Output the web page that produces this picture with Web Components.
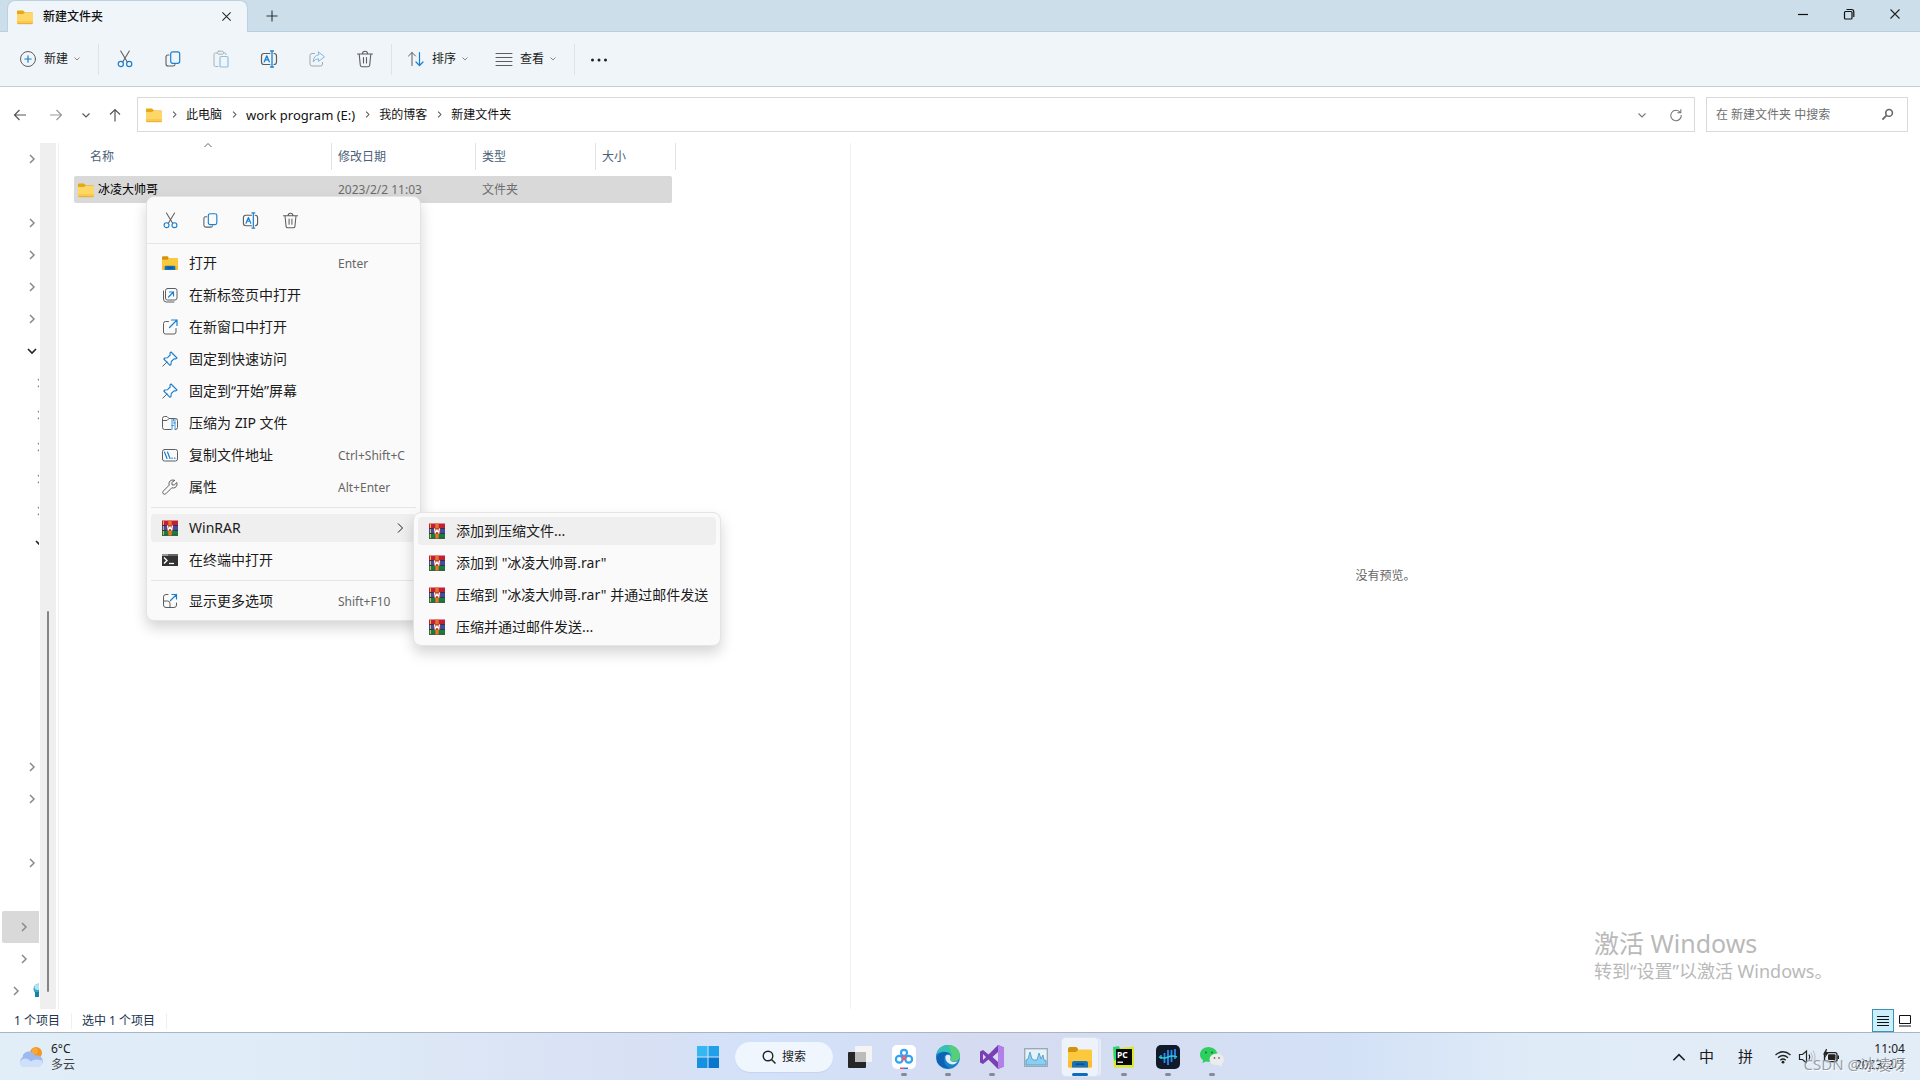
<!DOCTYPE html>
<html lang="zh-CN">
<head>
<meta charset="utf-8">
<meta name="viewport" content="width=device-width, initial-scale=1">
<title>新建文件夹</title>
<style>
  html, body { height: 100%; margin: 0; }
  body {
    font: 12px/16px "Noto Sans", "Noto Sans CJK SC", sans-serif;
    color: #1b1b1b;
    background: #fff;
    overflow: hidden;
    --line: #5e5e5e;
    --blue: #1b7fcf;
  }
</style>
</head>
<body>
<explorer-app></explorer-app>

<script>
const L = 'fill="none" stroke="var(--line)" stroke-linecap="round" stroke-linejoin="round"';
const B = 'fill="none" stroke="var(--blue)" stroke-linecap="round" stroke-linejoin="round"';

// name: [viewBox size, markup]
const ICONS = {
  folder: [16, `<path d="M0 2.5Q0 1.5 1 1.5H6L8 3.5H15Q16 3.5 16 4.500V6H0Z" fill="#e8a812"/><path d="M0 5H6L7.500 4H15.500Q16 4 16 4.500V14Q16 15 15 15H1Q0 15 0 14Z" fill="#ffd766"/><path d="M0 12H16V14Q16 15 15 15H1Q0 15 0 14Z" fill="#fcca4a"/><path d="M.5 14.700H15.500" stroke="#d9a227" stroke-width=".7"/>`],
  explorer: [24, `<path d="M0 4Q0 2 2 2H8Q9 2 10 4L10 8H0Z" fill="#d4930d"/><path d="M0 7H8L10.500 4.500H23Q24 4.500 24 6V21Q24 22.500 22.500 22.500H1.500Q0 22.500 0 21Z" fill="#fdc93c"/><path d="M0 16H24V21Q24 22.500 22.500 22.500H1.500Q0 22.500 0 21Z" fill="#fdbd2c"/><path d="M4 22.500V18Q4 16 6 16H18Q20 16 20 18V22.500Z" fill="#1672ba"/><path d="M7.500 19.200H16.500" stroke="#0b4f8c" stroke-width="1.500"/>`],
  close: [12, `<path d="M1.500 1.500 10.500 10.500M10.500 1.500 1.500 10.500" fill="none" stroke="#222" stroke-width="1.100"/>`],
  plus: [12, `<path d="M6 .5V11.500M.5 6H11.500" stroke="#333" stroke-width="1.100"/>`],
  min: [12, `<path d="M1 6.500H11" stroke="#111" stroke-width="1.200"/>`],
  restore: [12, `<rect x="1.500" y="3.500" width="7.500" height="7.500" rx="1" fill="none" stroke="#111" stroke-width="1.200"/><path d="M3.500 1.500H8.500Q10.800 1.500 10.800 4V9" fill="none" stroke="#111" stroke-width="1.200"/>`],
  add: [18, `<circle cx="9" cy="9" r="7.500" ${L}/><path d="M9 5.800V12.200M5.800 9H12.200" ${B} stroke-width="1.200"/>`],
  cut: [18, `<path d="M4.700 1 11.300 12M13.300 1 6.700 12" ${L} stroke-width="1.100"/><circle cx="4.800" cy="14" r="2.600" ${B} stroke-width="1.200"/><circle cx="13.200" cy="14" r="2.600" ${B} stroke-width="1.200"/>`],
  copy: [18, `<path d="M5 5H4Q2 5 2 7V14Q2 16 4 16H9Q11 16 11 14.500" ${L} stroke-width="1.100"/><rect x="6.700" y="1.800" width="9" height="11.500" rx="2" ${B} stroke-width="1.200"/>`],
  paste: [18, `<g opacity=".45"><path d="M5.500 3H3.500Q2 3 2 4.500V15Q2 16.500 3.500 16.500H6M12 3H13Q14 3 14 4.500" ${L}/><rect x="5.500" y="1.200" width="6" height="3" rx="1.300" ${L}/><rect x="8" y="6.500" width="8" height="10.500" rx="1.300" ${B} stroke-width="1.200"/></g>`],
  rename: [18, `<path d="M10 3.500H4Q1.500 3.500 1.500 6V12Q1.500 14.500 4 14.500H10M14 3.500Q16.500 3.500 16.500 6V12Q16.500 14.500 14 14.500" ${L} stroke-width="1.200"/><path d="M4.300 11.800 6.800 5.800 9.300 11.800M5.200 9.800H8.400" ${B} stroke-width="1.300"/><path d="M10.500 1H13.500M10.500 17H13.500M12 1V17" ${B} stroke-width="1.300"/>`],
  share: [18, `<g opacity=".5"><path d="M6.500 3.500H4Q2 3.500 2 5.500V14Q2 16 4 16H12.500Q14.500 16 14.500 14V12.500" ${L}/><path d="M10.500 2 16.500 6.800 10.500 11.500V8.800Q7 8.700 5.200 12Q5.500 5.300 10.500 4.800Z" ${B}/></g>`],
  trash: [18, `<path d="M1.500 4H16.500M6.500 3.700Q6.500 1.300 9 1.300T11.500 3.700M3.200 4.200 4.300 15.200Q4.500 16.700 6 16.700H12Q13.500 16.700 13.700 15.200L14.800 4.200M7.500 7.500V13M10.500 7.500V13" ${L} stroke-width="1.100"/>`],
  sort: [18, `<path d="M5 15.500V2.500M1.500 6 5 2.500 8.500 6" ${L}/><path d="M12.500 2.500V15.500M9 12 12.500 15.500 16 12" ${B} stroke-width="1.200"/>`],
  lines: [18, `<path d="M1 3.500H17M1 7.500H17M1 11.500H17M1 15.500H17" ${L}/>`],
  dots: [18, `<g fill="#222"><circle cx="2.500" cy="10" r="1.500"/><circle cx="9" cy="10" r="1.500"/><circle cx="15.500" cy="10" r="1.500"/></g>`],
  down: [10, `<path d="M1.500 3.500 5 7 8.500 3.500" fill="none" stroke="currentColor" stroke-width="1.100"/>`],
  smalldown: [10, `<path d="M2.500 3.500 5 6 7.500 3.500" fill="none" stroke="currentColor"/>`],
  right: [10, `<path d="M3 1 7 5 3 9" fill="none" stroke="currentColor" stroke-width="1.500"/>`],
  thinright: [10, `<path d="M3 .5 7.500 5 3 9.500" fill="none" stroke="currentColor"/>`],
  opened: [10, `<path d="M1 3 5 7 9 3" fill="none" stroke="#222" stroke-width="1.600"/>`],
  up: [10, `<path d="M1.500 7 5 3.500 8.500 7" fill="none" stroke="currentColor"/>`],
  back: [16, `<path d="M14 8H2.500M7.500 3 2.500 8 7.500 13" fill="none" stroke="currentColor" stroke-width="1.200"/>`],
  forward: [16, `<path d="M2 8H13.500M8.500 3 13.500 8 8.500 13" fill="none" stroke="currentColor" stroke-width="1.200"/>`],
  arrowup: [16, `<path d="M8 14.500V2.500M3 7.500 8 2.500 13 7.500" fill="none" stroke="currentColor" stroke-width="1.200"/>`],
  refresh: [16, `<path d="M13 5.200A6 6 0 1 0 14 8M13.500 1.500V5.500H9.500" fill="none" stroke="#777" stroke-width="1.200"/>`],
  find: [14, `<circle cx="8.700" cy="5.300" r="3.600" fill="none" stroke="#666" stroke-width="1.700"/><path d="M6 8 1.500 12.500" stroke="#666" stroke-width="2"/>`],
  newtab: [16, `<rect x="3.500" y="1.500" width="11.500" height="11.500" rx="2" ${L}/><path d="M1.500 4V12Q1.500 15 4.500 15H12" ${L}/><path d="M6.500 10 11.500 5M7.500 5H11.500V9" ${B} stroke-width="1.200"/>`],
  newwin: [16, `<path d="M6.500 2.500H3.500Q1.500 2.500 1.500 4.500V13Q1.500 15 3.500 15H12Q14 15 14 13V9.500" ${L}/><path d="M7.500 8.500 15 1M9.500 1H15V6.500" ${B} stroke-width="1.200"/>`],
  pin: [16, `<path d="M.8 15.200 5 11" ${L}/><path d="M9 1 15 7 13.500 8 12 7.800 9.300 10.500 9 13.500 8 14.300 1.800 8 2.800 7 5.500 6.700 8.200 4 8 2Z" ${B} stroke-width="1.100"/>`],
  zip: [16, `<path d="M9 14.500H2.500Q.5 14.500 .5 12.500V3.500Q.5 1.500 2.500 1.500H5L7 3.500H13.500Q15.500 3.500 15.500 5.500V12.500Q15.500 14.500 13.500 14.500M.5 5.500H5L7 3.500" ${L}/><path d="M11.500 4V6M10 4V14.500M13 4V14.500M11.500 8H13M10 10.500H11.500" ${B} stroke-width=".8"/>`],
  path: [16, `<rect x=".5" y="2.500" width="15" height="11.500" rx="2" ${L}/><path d="M2.500 5 5 11.500M5.500 5 8 11.500M9.800 11.200H10.300M12.500 11.200H13" ${B} stroke-width="1.200"/>`],
  wrench: [16, `<path d="M12.500 1.200Q9.500 .2 7.700 2.300Q6.500 4 7.200 6.200L1.200 12.200Q.2 13.500 1.200 14.700Q2.500 15.800 3.800 14.800L9.800 8.800Q12 9.500 13.700 8.200Q15.800 6.300 14.800 3.500L12.200 6L10 5.800 9.900 3.800Z" ${L}/>`],
  rar: [16, `<path d="M0 .5H16V5.500H0Z" fill="#c02038"/><path d="M0 5.500H16V10.500H0Z" fill="#4448a8"/><path d="M0 10.500H16V15.500H0Z" fill="#128238"/><path d="M0 5.500H16M0 10.500H16M0 15.300H16" stroke="#241f30" stroke-width=".8"/><path d="M1.500 1V5M1.500 6V10M1.500 11V15" stroke="#f1d05e" stroke-width=".8"/><path d="M6.300 .5H9.700V15.500H6.300Z" fill="#ee7424"/><path d="M4.800 5H11.200V11H4.800Z" fill="#b8442c"/><path d="M5.500 5.500 6.300 9.700 8 7 9.700 9.700 10.500 5.500" fill="none" stroke="#fff" stroke-width="1.200"/>`],
  terminal: [16, `<path d="M0 2H16V14H0Z" fill="#333"/><path d="M0 2H16V4H0Z" fill="#666"/><path d="M0 2H6V4H0Z" fill="#999"/><path d="M2 5.500 5 8.500 2 11.500" fill="none" stroke="#fff" stroke-width="1.400"/><path d="M7 11.500H12" stroke="#fff" stroke-width="1.300"/>`],
  more: [16, `<path d="M6 1.500H4Q1.500 1.500 1.500 4V12Q1.500 14.500 4 14.500H12Q14.500 14.500 14.500 12V10M1.500 8H5.500Q8 8 8 10.500V14.500" ${L}/><path d="M8.500 7.500 14.500 1.500M10 1.500H14.500V6" ${B} stroke-width="1.200"/>`],
  bulb: [16, `<circle cx="6" cy="6" r="5.500" fill="#35a6c9"/><circle cx="4.500" cy="4" r="3" fill="#b5e3ef"/><path d="M2 9H11V14H2Z" fill="#1582ad"/>`],
  details: [14, `<path d="M1 2.500H13M1 5.500H13M1 8.500H13M1 11.500H13" stroke="#111"/>`],
  thumbs: [14, `<path d="M1.500 1.500H12.500V9.500H1.500Z" fill="#fff" stroke="#111"/><path d="M1 12H13" stroke="#111"/>`],
  weather: [24, `<circle cx="17" cy="8" r="6" fill="#f6951f"/><circle cx="16" cy="6" r="3" fill="#fbb13a" opacity=".7"/><path d="M5 22A5.200 5.200 0 0 1 3.500 12.500A6.500 6.500 0 0 1 16 10.500A5.800 5.800 0 0 1 19.500 22Z" fill="#9db9ee"/><path d="M5 22A4 4 0 0 1 3 14.500Q8 12 12 16.500Q15 13 23 15.500Q24.500 21 19.500 22Z" fill="#cfe0fb"/>`],
  start: [24, `<path d="M1 1H11.500V11.500H1Z" fill="#35b8f1"/><path d="M12.500 1H23V11.500H12.500Z" fill="#1fa0e8"/><path d="M1 12.500H11.500V23H1Z" fill="#1690e0"/><path d="M12.500 12.500H23V23H12.500Z" fill="#0878cc"/>`],
  search: [14, `<circle cx="6" cy="6" r="4.800" fill="none" stroke="#222" stroke-width="1.400"/><path d="M9.500 9.500 13.500 13.500" stroke="#222" stroke-width="1.500"/>`],
  taskview: [24, `<rect x="7" y="1" width="17" height="16" rx="1" fill="#f4f4f4"/><rect y="7" width="18" height="16" rx="1" fill="#262626"/><path d="M7 7H18V17H7Z" fill="#bcbcbc"/>`],
  baidu: [24, `<rect width="24" height="24" rx="5" fill="#fff"/><g fill="none" stroke-width="2.200"><circle cx="7.300" cy="14.300" r="3.400" stroke="#2ba5f4"/><circle cx="16.700" cy="14.300" r="3.400" stroke="#2ba5f4"/><circle cx="12" cy="7.800" r="3" stroke="#39a5f2"/><path d="M9.500 10.500Q12 13.500 14.500 10.500M10 15.500 12 13 14 15.500" stroke="#ee5a72" stroke-width="1.700"/></g><path d="M8 23.300H12" stroke="#ee4a62" stroke-width="1.500"/><path d="M12 23.300H16" stroke="#2b78ee" stroke-width="1.500"/>`],
  edge: [24, `<circle cx="12" cy="12" r="12" fill="#1684cb"/><path d="M.5 9Q3 0 12 0Q22.500 .5 24 10Q24 16 18 16.500Q13.500 16.500 14.500 14Q16.500 11.500 14 9Q8 4 .5 9Z" fill="#35c1b5"/><path d="M12 0Q22.500 .5 24 10Q24 16 18 16.500Q13.500 16.500 14.500 14Q18 10 12 0Z" fill="#6ad557" opacity=".65"/><path d="M8.500 11Q6.500 20 14 23.500Q5 24 1 17Q-1 9 6 7.500Q12 6 14.500 9.500Q10.500 8 8.500 11Z" fill="#0d62b5"/><path d="M9.500 11Q12 8.500 14.500 11Q15 13 14 14.500Q14.500 18 22 16.500Q18 21 13 18.500Q8.500 16 9.500 11Z" fill="#e4edf7"/>`],
  vs: [24, `<path d="M18 0 24 2.500V21.500L18 24 8.500 14.500 3 19 0 17.500V6.500L3 5 8.500 9.500ZM18 7 12.500 12 18 17ZM3 9V15L6 12Z" fill="#7b3fb4" fill-rule="evenodd"/><path d="M18 0 24 2.500V21.500L18 24Z" fill="#b180eb"/>`],
  monitor: [24, `<rect x=".7" y="3.700" width="22.600" height="17.600" fill="#e6f1f8" stroke="#98a7b2" stroke-width="1.300"/><path d="M2 19V15L4 14 6 7 8 14 10 15 13 15 15 8 17 14 19 10 20 15 22 15.500V20H2Z" fill="#8dcdf0" stroke="#419acb" stroke-width=".8"/>`],
  pycharm: [24, `<path d="M1 2 8 3 22 1.500V22.500H2Z" fill="#d9ea25"/><path d="M1 2 7 1 10 10 2 16Z" fill="#29d96c"/><rect x="4" y="4" width="16" height="16" fill="#080808"/><text x="5" y="12.500" font-family="Noto Sans" font-weight="700" font-size="8.500" fill="#fff">PC</text><path d="M5.500 17.200H11" stroke="#fff" stroke-width="1.300"/>`],
  wave: [24, `<rect width="24" height="24" rx="5" fill="#111a28"/><path d="M5 10V14M8.500 8V18M12 5V20M15.500 5V17M19 4V14" stroke="#278af4" stroke-width="1.800"/><path d="M3 12Q8 14 12 12T21 12" fill="none" stroke="#22d5d2" stroke-width="1.500"/>`],
  wechat: [24, `<path d="M9 2C3.500 2 0 5.500 0 9.500Q0 13 3 15L2.500 18 6 16.500Q15 18 17.500 11.500Q18 3 9 2Z" fill="#2ecf5f"/><path d="M16.500 8.500Q9.500 9.500 9.500 14.500Q10 20.500 18.500 20L22 22 21.500 19Q24 17 24 14.500Q23.500 9 16.500 8.500Z" fill="#ececec"/><g fill="#14783a"><circle cx="6" cy="7.500" r="1"/><circle cx="12" cy="7.500" r="1"/></g><g fill="#777"><circle cx="14.500" cy="13" r=".9"/><circle cx="19" cy="13" r=".9"/></g>`],
  wifi: [18, `<path d="M1.500 7Q9 .5 16.500 7M4 9.700Q9 5.200 14 9.700M6.300 12.200Q9 9.800 11.700 12.200" fill="none" stroke="#222" stroke-width="1.300"/><circle cx="9" cy="14.200" r="1.400" fill="#222"/>`],
  sound: [18, `<path d="M1.500 6.500H4.500L8.500 3V15L4.500 11.500H1.500Z" fill="none" stroke="#222" stroke-width="1.200"/><path d="M11 6.500Q12.500 9 11 11.500" fill="none" stroke="#222" stroke-width="1.200"/><path d="M13 4.500Q16 9 13 13.500M15 2.500Q19 9 15 15.500" fill="none" stroke="#b5bcc4"/>`],
  battery: [18, `<rect x="2.500" y="4.700" width="12.500" height="9" rx="2" fill="none" stroke="#222" stroke-width="1.300"/><rect x="6" y="6.300" width="7.500" height="5.800" rx="1" fill="#222"/><path d="M15.500 7.500H17V11H15.500Z" fill="#222"/><path d="M4 1 1 6.500H3.500L2.500 10.500 6.500 4.800H4.200L5 1Z" fill="#222"/>`]
};

class UiIcon extends HTMLElement {
  connectedCallback() {
    const [box, markup] = ICONS[this.getAttribute('name')];
    const size = this.getAttribute('size') || box;
    this.attachShadow({ mode: 'open' });
    this.shadowRoot.innerHTML = `
      <style>
        :host { display: inline-flex; flex: none; }
        svg { display: block; overflow: visible; }
      </style>
      <svg width="${size}" height="${size}" viewBox="0 0 ${box} ${box}" aria-hidden="true">${markup}</svg>
    `;
  }
}
customElements.define('ui-icon', UiIcon);

const BUTTON_RESET = `
  button { border: 0; background: none; padding: 0; margin: 0; font: inherit; color: inherit; display: flex; align-items: center; justify-content: center; }
`;

class TitleBar extends HTMLElement {
  connectedCallback() {
    this.attachShadow({ mode: 'open' });
    this.shadowRoot.innerHTML = `
      <style>
        ${BUTTON_RESET}
        :host { display: flex; height: 31px; padding: 0 2px 0 7px; background: #cbdeea; border-bottom: 1px solid #b8cfdf; }
        .tab {
          display: flex; align-items: center; gap: 10px; box-sizing: border-box;
          width: 241px; height: 32px; padding: 0 13px 0 9px;
          background: #eff5f9; border: 1px solid #bdd2e1; border-bottom: 0; border-radius: 8px 8px 0 0;
          font-weight: 500; color: #111;
        }
        .tab span { flex: 1; }
        .tab button { width: 16px; height: 16px; }
        .add { width: 48px; height: 32px; }
        .window { display: flex; margin-left: auto; }
        .window button { width: 46px; height: 28px; }
      </style>
      <div class="tab">
        <ui-icon name="folder"></ui-icon><span>新建文件夹</span>
        <button aria-label="关闭标签页"><ui-icon name="close" size="11"></ui-icon></button>
      </div>
      <button class="add" aria-label="新标签页"><ui-icon name="plus"></ui-icon></button>
      <div class="window">
        <button aria-label="最小化"><ui-icon name="min"></ui-icon></button>
        <button aria-label="还原"><ui-icon name="restore"></ui-icon></button>
        <button aria-label="关闭"><ui-icon name="close"></ui-icon></button>
      </div>
    `;
  }
}
customElements.define('title-bar', TitleBar);

class CommandBar extends HTMLElement {
  connectedCallback() {
    const tools = [['cut', '剪切'], ['copy', '复制'], ['paste', '粘贴'], ['rename', '重命名'], ['share', '共享'], ['trash', '删除']];
    this.attachShadow({ mode: 'open' });
    this.shadowRoot.innerHTML = `
      <style>
        ${BUTTON_RESET}
        :host { display: flex; align-items: center; height: 54px; padding-left: 10px; background: #eff5f9; border-bottom: 1px solid #bdd0d6; }
        button { height: 32px; }
        .text { width: 88px; justify-content: flex-start; gap: 7px; padding-left: 9px; }
        .text ui-icon:last-child { color: #888; margin-left: -3px; }
        .tools { display: flex; padding: 0 2px; margin-right: 6px; border: solid #dce4ea; border-width: 0 1px; height: 31px; align-items: center; }
        .tool { width: 48px; }
        i { width: 1px; height: 31px; background: #dce4ea; }
      </style>
      <button class="text"><ui-icon name="add"></ui-icon>新建<ui-icon name="smalldown"></ui-icon></button>
      <div class="tools">
        ${tools.map(([icon, label]) => `<button class="tool" aria-label="${label}"><ui-icon name="${icon}"></ui-icon></button>`).join('')}
      </div>
      <button class="text"><ui-icon name="sort"></ui-icon>排序<ui-icon name="smalldown"></ui-icon></button>
      <button class="text"><ui-icon name="lines"></ui-icon>查看<ui-icon name="smalldown"></ui-icon></button>
      <i></i>
      <button class="tool" aria-label="查看更多"><ui-icon name="dots"></ui-icon></button>
    `;
  }
}
customElements.define('command-bar', CommandBar);

class AddressBar extends HTMLElement {
  connectedCallback() {
    const crumbs = ['此电脑', 'work program (E:)', '我的博客', '新建文件夹'];
    this.attachShadow({ mode: 'open' });
    this.shadowRoot.innerHTML = `
      <style>
        ${BUTTON_RESET}
        :host { display: flex; align-items: center; padding: 10px 12px 11px 2px; }
        .nav { display: flex; align-items: center; color: #555; width: 135px; }
        .nav button { width: 36px; height: 32px; }
        .nav button:nth-child(2) { color: #999; }
        .nav button:nth-child(3) { width: 24px; }
        .nav button:nth-child(4) { width: 34px; }
        .box { display: flex; align-items: center; box-sizing: border-box; height: 35px; border: 1px solid #d9d9d9; background: #fff; }
        .path { flex: 1; padding: 0 6px 0 8px; }
        .path a { color: #111; text-decoration: none; }
        .path a:nth-of-type(2) { font-size: 13px; }
        .sep { display: flex; width: 24px; justify-content: center; color: #555; }
        .path button { width: 24px; height: 32px; margin-left: 10px; color: #777; }
        .path .first { margin-left: auto; }
        .search { width: 202px; margin-left: 11px; padding: 0 13px 0 9px; }
        input { flex: 1; min-width: 0; border: 0; padding: 0; outline: 0; font: inherit; background: none; }
        input::placeholder { color: #707070; opacity: 1; }
      </style>
      <div class="nav">
        <button aria-label="后退"><ui-icon name="back"></ui-icon></button>
        <button aria-label="前进"><ui-icon name="forward"></ui-icon></button>
        <button aria-label="最近浏览的位置"><ui-icon name="down"></ui-icon></button>
        <button aria-label="向上"><ui-icon name="arrowup"></ui-icon></button>
      </div>
      <div class="box path">
        <ui-icon name="folder"></ui-icon>
        ${crumbs.map(text => `<span class="sep"><ui-icon name="right" size="7"></ui-icon></span><a href="#">${text}</a>`).join('')}
        <button class="first" aria-label="以前的位置"><ui-icon name="down"></ui-icon></button>
        <button aria-label="刷新"><ui-icon name="refresh" size="14"></ui-icon></button>
      </div>
      <div class="box search">
        <input type="text" aria-label="搜索" placeholder="在 新建文件夹 中搜索">
        <button aria-label="搜索"><ui-icon name="find" size="13"></ui-icon></button>
      </div>
    `;
  }
}
customElements.define('address-bar', AddressBar);

class NavTree extends HTMLElement {
  connectedCallback() {
    // one entry per row: chevron and depth, '' is a row without a chevron
    const rows = ['right 3', '', 'right 3', 'right 3', 'right 3', 'right 3', 'opened 3',
      'right 4', 'right 4', 'right 4', 'right 4', 'right 4', 'opened 4',
      '', '', '', '', '', '', 'right 3', 'right 3', '', 'right 3', '', 'right 2 on', 'right 2', 'right 1 bulb'];
    this.attachShadow({ mode: 'open' });
    this.shadowRoot.innerHTML = `
      <style>
        :host { display: flex; min-height: 0; border-right: 1px solid #f0f0f0; color: #8a8a8a; }
        ul { list-style: none; margin: 0; padding: 0 0 0 2px; width: 37px; overflow: hidden; }
        li { display: flex; align-items: center; height: 32px; gap: 12px; }
        .on { background: #d9d9d9; border-radius: 2px 0 0 2px; }
        .track { width: 16px; margin-left: 1px; background: #efefef; display: flex; justify-content: center; }
        .thumb { width: 2px; height: 44%; margin-top: 468px; background: #858585; border-radius: 1px; }
      </style>
      <ul>
        ${rows.map(row => {
          const [icon, depth, extra] = row.split(' ');
          if (!icon) return '<li></li>';
          return `<li class="${extra || ''}" style="padding-left:${depth * 8 + 1}px"><ui-icon name="${icon}"></ui-icon>${extra === 'bulb' ? '<ui-icon name="bulb"></ui-icon>' : ''}</li>`;
        }).join('')}
      </ul>
      <div class="track"><div class="thumb"></div></div>
    `;
  }
}
customElements.define('nav-tree', NavTree);

class FileList extends HTMLElement {
  connectedCallback() {
    this.attachShadow({ mode: 'open' });
    this.shadowRoot.innerHTML = `
      <style>
        :host { display: block; padding-left: 15px; border-right: 1px solid #f2f2f2; }
        table { border-collapse: separate; border-spacing: 0; table-layout: fixed; width: 602px; }
        th, td { padding: 0; text-align: left; font-weight: 400; }
        th { height: 33px; vertical-align: top; color: #4c607a; }
        th div { position: relative; box-sizing: border-box; height: 27px; padding: 6px 0 0 6px; border-right: 1px solid #e3e3e3; }
        th:nth-child(4) div { border-right: 0; }
        th:first-child div { padding-left: 16px; }
        th ui-icon { position: absolute; top: -3px; left: 50%; color: #666; }
        td { height: 27px; background: #d9d9d9; color: #6d6d6d; padding-left: 6px; }
        td:first-child { padding-left: 4px; color: #000; border-radius: 2px 0 0 2px; }
        td:nth-child(4) { border-radius: 0 2px 2px 0; }
        td:last-child { background: none; padding: 0; }
        th:last-child div { padding: 0; }
        .name { display: flex; align-items: center; gap: 4px; }
      </style>
      <table>
        <colgroup><col style="width:258px"><col style="width:144px"><col style="width:120px"><col style="width:76px"><col></colgroup>
        <thead><tr>
          <th><div>名称<ui-icon name="up"></ui-icon></div></th>
          <th><div>修改日期</div></th><th><div>类型</div></th><th><div>大小</div></th><th><div></div></th>
        </tr></thead>
        <tbody><tr>
          <td><div class="name"><ui-icon name="folder"></ui-icon>冰凌大帅哥</div></td>
          <td>2023/2/2 11:03</td><td>文件夹</td><td></td><td></td>
        </tr></tbody>
      </table>
    `;
  }
}
customElements.define('file-list', FileList);

class StatusBar extends HTMLElement {
  connectedCallback() {
    this.attachShadow({ mode: 'open' });
    this.shadowRoot.innerHTML = `
      <style>
        ${BUTTON_RESET}
        :host { display: flex; align-items: center; height: 23px; padding: 0 4px 0 14px; color: #20334f; }
        span { padding-right: 11px; margin-right: 10px; border-right: 1px solid #f0f0f0; }
        div { display: flex; margin-left: auto; }
        button { box-sizing: border-box; width: 22px; height: 23px; }
        .on { background: #cdeefb; border: 1px solid #3c93b5; }
      </style>
      <span>1 个项目</span><span>选中 1 个项目</span>
      <div>
        <button class="on" aria-label="详细信息"><ui-icon name="details"></ui-icon></button>
        <button aria-label="大缩略图"><ui-icon name="thumbs"></ui-icon></button>
      </div>
    `;
  }
}
customElements.define('status-bar', StatusBar);

class MenuItem extends HTMLElement {
  connectedCallback() {
    const keys = this.getAttribute('keys');
    this.attachShadow({ mode: 'open' });
    this.shadowRoot.innerHTML = `
      <style>
        :host { display: block; padding: 2px 3px; font-size: 14px; line-height: 20px; }
        button {
          display: flex; align-items: center; width: 100%; height: 28px; padding: 0 11px; border: 0; border-radius: 4px;
          background: none; font: inherit; color: #1b1b1b; text-align: left; white-space: nowrap;
        }
        :host([active]) button { background: #efefef; }
        .label { flex: 1; padding-left: 11px; }
        .keys { width: 67px; padding-top: 1px; font-size: 12px; color: #666; }
      </style>
      <button role="menuitem">
        <ui-icon name="${this.getAttribute('icon')}" size="16"></ui-icon>
        <span class="label"><slot></slot></span>
        ${keys ? `<span class="keys">${keys}</span>` : ''}
        ${this.hasAttribute('submenu') ? '<ui-icon name="thinright"></ui-icon>' : ''}
      </button>
    `;
  }
}
customElements.define('menu-item', MenuItem);

class PopupMenu extends HTMLElement {
  connectedCallback() {
    this.setAttribute('role', 'menu');
    this.attachShadow({ mode: 'open' });
    this.shadowRoot.innerHTML = `
      <style>
        :host {
          display: block; box-sizing: border-box; padding: 2px 1px; background: #fafafa;
          border: 1px solid #e4e4e4; border-radius: 8px; box-shadow: 0 7px 14px rgba(0, 0, 0, .17);
        }
        ::slotted(hr) { margin: 4px 3px; border: 0; border-top: 1px solid #e5e5e5; }
      </style>
      <slot></slot>
    `;
  }
}
customElements.define('popup-menu', PopupMenu);

class TaskBar extends HTMLElement {
  connectedCallback() {
    const apps = [['baidu', '百度网盘', 'run'], ['edge', 'Edge', 'run'], ['vs', 'Visual Studio', 'run'], ['monitor', '资源监视器', ''],
      ['explorer', '文件资源管理器', 'run on'], ['pycharm', 'PyCharm', 'run'], ['wave', '音频', 'run'], ['wechat', '微信', 'run']];
    this.attachShadow({ mode: 'open' });
    this.shadowRoot.innerHTML = `
      <style>
        ${BUTTON_RESET}
        :host {
          display: grid; grid-template-columns: 1fr auto 1fr; align-items: center; position: relative;
          box-sizing: border-box; height: 48px; border-top: 1px solid #a9b5c3;
          background: linear-gradient(90deg, #e1eef8, #dfebf7 16%, #d8e0f4 34%, #d2e2fa 40%, #d5dcf2 50%, #d5ddf2 60%, #d3e1f7 70%, #dfebf7 80%, #e3edf7);
        }
        .weather { justify-self: start; padding-left: 19px; gap: 8px; text-align: left; }
        .weather small { display: block; font-size: 12px; color: #444; }
        .center { display: flex; align-items: center; }
        .app { position: relative; box-sizing: border-box; width: 36px; height: 38px; margin: 0 4px; border-radius: 4px; }
        .run::after { content: ''; position: absolute; left: 15px; bottom: 0; width: 6px; height: 3px; border-radius: 2px; background: #858a94; }
        .on { background: #edf2fb; box-shadow: 0 0 0 1px #dce2ee, 3px 0 0 #e6ecf8; }
        .on::after { left: 10px; width: 16px; background: #0f6cbd; }
        .search { width: 98px; height: 30px; margin: 0 5px 0 5px; gap: 6px; border-radius: 15px; background: #f0f6fd; box-shadow: 0 1px 1px #c8d4e8; }
        .tray { display: flex; align-items: center; justify-self: end; padding-right: 15px; }
        .tray button { width: 24px; height: 32px; }
        .langs { display: flex; margin: 0 6px 0 -4px; padding-bottom: 2px; font-size: 15px; }
        .langs button { width: 39px; }
        .tray .clock { display: block; width: 62px; text-align: right; }
      </style>
      <button class="weather"><ui-icon name="weather"></ui-icon><span>6°C<small>多云</small></span></button>
      <div class="center">
        <button class="app" aria-label="开始"><ui-icon name="start"></ui-icon></button>
        <button class="search"><ui-icon name="search"></ui-icon>搜索</button>
        <button class="app" aria-label="任务视图"><ui-icon name="taskview"></ui-icon></button>
        ${apps.map(([icon, label, state]) => `<button class="app ${state}" aria-label="${label}"><ui-icon name="${icon}"></ui-icon></button>`).join('')}
      </div>
      <div class="tray">
        <button aria-label="显示隐藏的图标"><ui-icon name="up" size="16"></ui-icon></button>
        <div class="langs"><button>中</button><button>拼</button></div>
        <button aria-label="网络"><ui-icon name="wifi"></ui-icon></button>
        <button aria-label="音量"><ui-icon name="sound"></ui-icon></button>
        <button aria-label="电池"><ui-icon name="battery"></ui-icon></button>
        <button class="clock">11:04<br>2023/2/2</button>
      </div>
    `;
  }
}
customElements.define('task-bar', TaskBar);

class ExplorerApp extends HTMLElement {
  connectedCallback() {
    this.attachShadow({ mode: 'open' });
    this.shadowRoot.innerHTML = `
      <style>
        ${BUTTON_RESET}
        :host { display: flex; flex-direction: column; height: 100vh; position: relative; }
        main { flex: 1; min-height: 0; display: grid; grid-template: minmax(0, 1fr) / 59px minmax(0, 20fr) minmax(0, 27fr); }
        .preview { display: grid; place-items: center; color: #666; }
        .context { position: absolute; left: 146px; top: 196px; width: 275px; padding-bottom: 3px; }
        .quick { display: flex; height: 42px; align-items: center; padding: 0 0 2px 3px; margin: 0 -1px 3px; border-bottom: 1px solid #e5e5e5; }
        .quick button { width: 40px; height: 32px; }
        .sub { position: absolute; left: 413px; top: 512px; width: 308px; }
        .activate { position: absolute; right: 90px; bottom: 96px; width: 236px; color: #b9b9b9; font-size: 18px; line-height: 26px; white-space: nowrap; }
        .activate b { display: block; font-weight: 400; font-size: 25px; line-height: 30px; }
        .credit { position: absolute; right: 14px; bottom: 5px; font-size: 15px; line-height: 22px; color: #8d939b; text-shadow: 1px 1px 0 #fff; opacity: .85; }
      </style>
      <title-bar></title-bar>
      <command-bar></command-bar>
      <address-bar></address-bar>
      <main>
        <nav-tree></nav-tree>
        <file-list></file-list>
        <div class="preview">没有预览。</div>
      </main>
      <status-bar></status-bar>
      <task-bar></task-bar>

      <popup-menu class="context">
        <div class="quick">
          <button aria-label="剪切"><ui-icon name="cut" size="17"></ui-icon></button>
          <button aria-label="复制"><ui-icon name="copy" size="17"></ui-icon></button>
          <button aria-label="重命名"><ui-icon name="rename" size="17"></ui-icon></button>
          <button aria-label="删除"><ui-icon name="trash" size="17"></ui-icon></button>
        </div>
        <menu-item icon="explorer" keys="Enter">打开</menu-item>
        <menu-item icon="newtab">在新标签页中打开</menu-item>
        <menu-item icon="newwin">在新窗口中打开</menu-item>
        <menu-item icon="pin">固定到快速访问</menu-item>
        <menu-item icon="pin">固定到“开始”屏幕</menu-item>
        <menu-item icon="zip">压缩为 ZIP 文件</menu-item>
        <menu-item icon="path" keys="Ctrl+Shift+C">复制文件地址</menu-item>
        <menu-item icon="wrench" keys="Alt+Enter">属性</menu-item>
        <hr>
        <menu-item icon="rar" active submenu>WinRAR</menu-item>
        <menu-item icon="terminal">在终端中打开</menu-item>
        <hr>
        <menu-item icon="more" keys="Shift+F10">显示更多选项</menu-item>
      </popup-menu>
      <popup-menu class="sub">
        <menu-item icon="rar" active>添加到压缩文件...</menu-item>
        <menu-item icon="rar">添加到 "冰凌大帅哥.rar"</menu-item>
        <menu-item icon="rar">压缩到 "冰凌大帅哥.rar" 并通过邮件发送</menu-item>
        <menu-item icon="rar">压缩并通过邮件发送...</menu-item>
      </popup-menu>
      <div class="activate"><b>激活 Windows</b>转到“设置”以激活 Windows。</div>
      <div class="credit">CSDN @冰凌呀</div>
    `;
  }
}
customElements.define('explorer-app', ExplorerApp);
</script>
</body>
</html>
